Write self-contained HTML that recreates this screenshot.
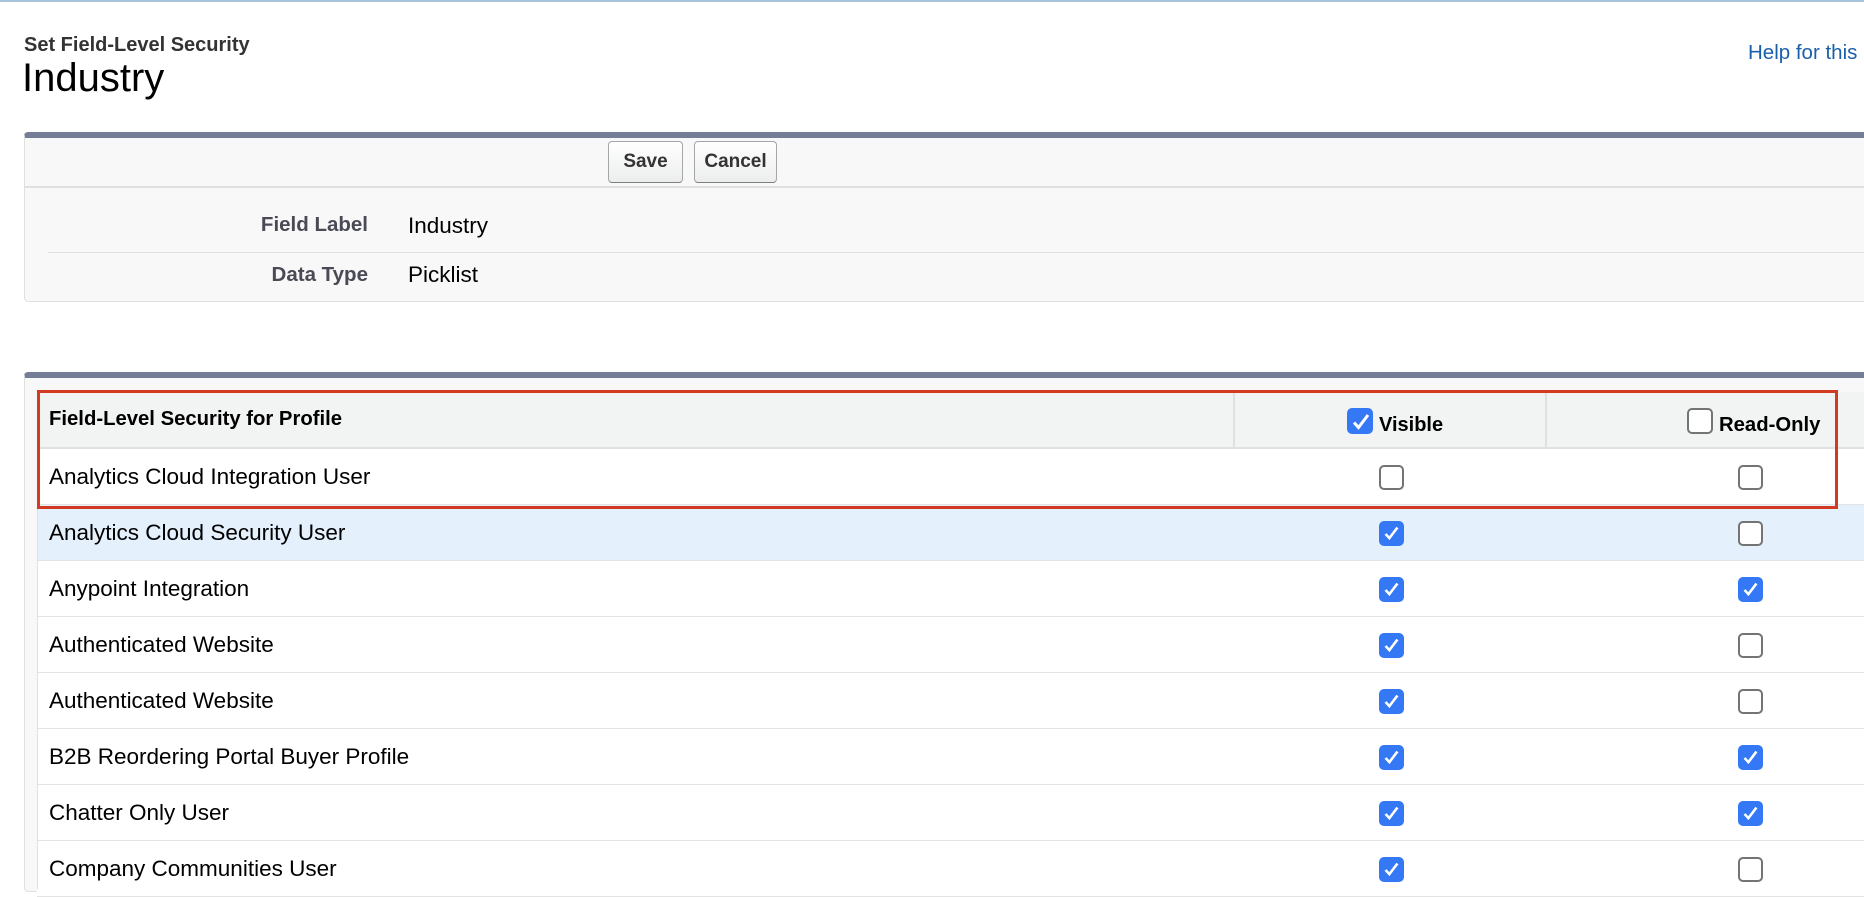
<!DOCTYPE html>
<html><head><meta charset="utf-8"><style>
*{margin:0;padding:0;box-sizing:border-box}
body{width:1864px;height:888px;overflow:hidden;background:#fff;font-family:"Liberation Sans",Arial,sans-serif;color:#000;position:relative}
.a{position:absolute}
.cb{position:absolute;width:25px;height:25px;border:2px solid #747474;border-radius:5px;background:#fff}
.cb.on{background:#3478f6;border-color:#3478f6}
.cb.on svg{position:absolute;left:2px;top:2px}
.row{position:absolute;left:37px;width:1827px;height:56px;border-bottom:1px solid #e3e3e3;background:#fff}
.row span{position:absolute;left:12px;top:0;line-height:55px;font-size:22.5px}
.btn{position:absolute;top:141px;height:42px;border:1px solid #a5a6a7;border-bottom-color:#7f7f7f;border-radius:4px;background:linear-gradient(#fff,#eceded);font-weight:bold;font-size:19px;line-height:40px;text-align:center;color:#333}
</style></head><body>
<div class="a" style="left:0;top:0;width:1864px;height:2px;background:#a9c3dd"></div>
<div class="a" style="left:24px;top:34px;font-size:20px;font-weight:bold;color:#333">Set Field-Level Security</div>
<div class="a" style="left:22px;top:56px;font-size:40px;color:#000">Industry</div>
<div class="a" style="left:1748px;top:41px;font-size:20.5px;color:#1b5fab">Help for this</div>

<div class="a" style="left:24px;top:132px;width:1850px;height:170px;background:#f8f8f8;border:1px solid #e0e0e0;border-top:6px solid #747e96;border-radius:4px"></div>
<div class="a" style="left:24px;top:186px;width:1840px;height:2px;background:#e0e0e0"></div>
<div class="btn" style="left:608px;width:75px">Save</div>
<div class="btn" style="left:694px;width:83px">Cancel</div>
<div class="a" style="left:168px;width:200px;top:213px;text-align:right;font-size:20.5px;font-weight:bold;color:#4a4a56">Field Label</div>
<div class="a" style="left:408px;top:213px;font-size:22.5px">Industry</div>
<div class="a" style="left:48px;top:252px;width:1816px;height:1px;background:#e0e0e0"></div>
<div class="a" style="left:168px;width:200px;top:263px;text-align:right;font-size:20.5px;font-weight:bold;color:#4a4a56">Data Type</div>
<div class="a" style="left:408px;top:262px;font-size:22.5px">Picklist</div>

<div class="a" style="left:24px;top:372px;width:1850px;height:520px;background:#f8f8f8;border:1px solid #e0e0e0;border-top:6px solid #747e96;border-radius:4px"></div>
<div class="a" style="left:37px;top:392px;width:1827px;height:57px;background:#f2f3f3;border-bottom:2px solid #e0e0e0"></div>
<div class="a" style="left:1233px;top:392px;width:2px;height:57px;background:#e0e0e0"></div>
<div class="a" style="left:1545px;top:392px;width:2px;height:57px;background:#e0e0e0"></div>
<div class="a" style="left:49px;top:408px;font-size:20.3px;font-weight:bold">Field-Level Security for Profile</div>
<div class="cb on" style="left:1347px;top:408px;width:26px;height:26px"><svg width="20" height="20" viewBox="0 0 20 20"><path d="M3 10.5l4.5 5L17 3" fill="none" stroke="#fff" stroke-width="3"/></svg></div>
<div class="a" style="left:1379px;top:414px;font-size:20px;font-weight:bold">Visible</div>
<div class="cb" style="left:1687px;top:408px;width:26px;height:26px"></div>
<div class="a" style="left:1719px;top:414px;font-size:20.3px;font-weight:bold">Read-Only</div>

<div class="row" style="top:449px"><span>Analytics Cloud Integration User</span></div>
<div class="row" style="top:505px;background:#e4f0fc"><span>Analytics Cloud Security User</span></div>
<div class="row" style="top:561px"><span>Anypoint Integration</span></div>
<div class="row" style="top:617px"><span>Authenticated Website</span></div>
<div class="row" style="top:673px"><span>Authenticated Website</span></div>
<div class="row" style="top:729px"><span>B2B Reordering Portal Buyer Profile</span></div>
<div class="row" style="top:785px"><span>Chatter Only User</span></div>
<div class="row" style="top:841px"><span>Company Communities User</span></div>

<div id="cbs"></div>
<script>
var st=[[0,0],[1,0],[1,1],[1,0],[1,0],[1,1],[1,1],[1,0]];
var h='';var ck='<svg width="17" height="17" viewBox="0 0 20 20"><path d="M3 10.5l4.5 5L17 3" fill="none" stroke="#fff" stroke-width="3"/></svg>';
st.forEach(function(s,i){var y=449+i*56+16;
h+='<div class="cb'+(s[0]?' on':'')+'" style="left:1379px;top:'+y+'px">'+(s[0]?ck:'')+'</div>';
h+='<div class="cb'+(s[1]?' on':'')+'" style="left:1738px;top:'+y+'px">'+(s[1]?ck:'')+'</div>';});
document.getElementById('cbs').innerHTML=h;
</script>
<div class="a" style="left:37px;top:449px;width:1px;height:440px;background:#e0e0e0"></div>
<div class="a" style="left:37px;top:390px;width:1801px;height:119px;border:3px solid #d33a22"></div>
</body></html>
